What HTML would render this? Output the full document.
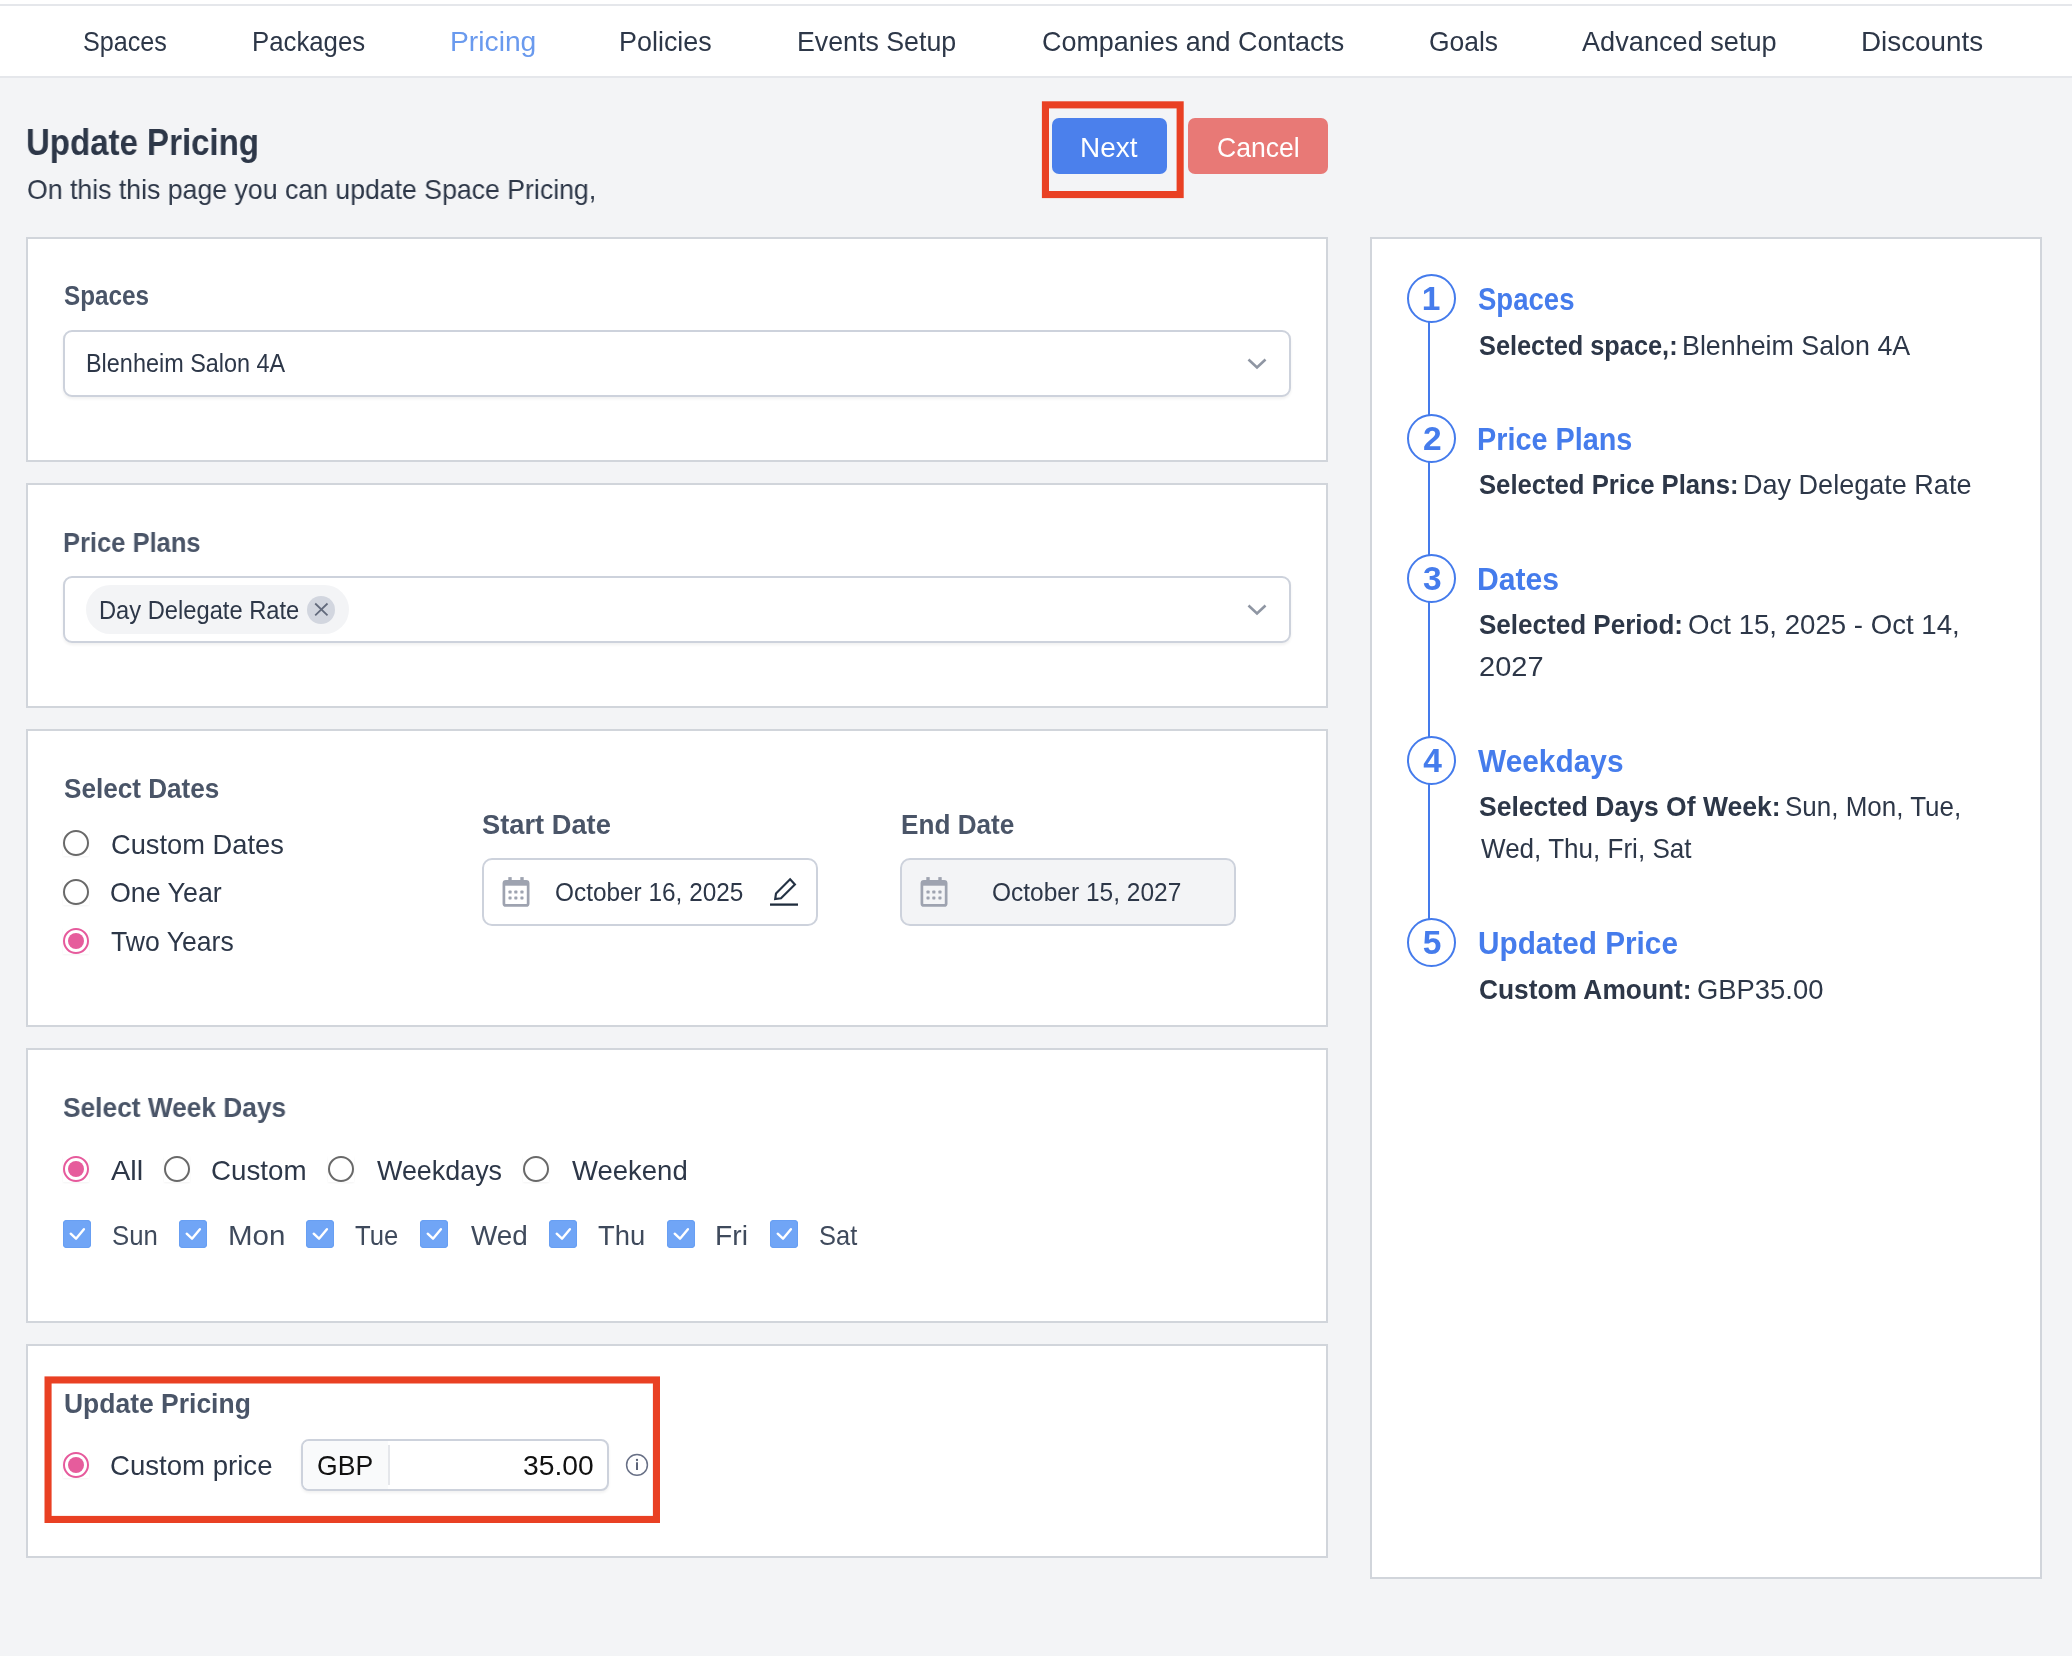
<!DOCTYPE html>
<html lang="en">
<head>
<meta charset="utf-8">
<title>Update Pricing</title>
<style>
*,*:before,*:after{box-sizing:border-box}
html,body{margin:0;padding:0}
body{width:2072px;height:1656px;position:relative;overflow:hidden;background:#f3f4f6;font-family:"Liberation Sans",sans-serif;color:#2d3748;will-change:transform}
.t{position:absolute;white-space:pre;line-height:1;margin:0;text-decoration:none;transform-origin:0 0}
.ic{position:absolute;display:block}
nav{position:absolute;left:0;top:0;width:2072px;height:78px;background:#fff;border-top:2px solid #e5e7eb;border-bottom:2px solid #e5e7eb}
nav:before{content:"";position:absolute;left:0;top:-2px;width:100%;height:4px;background:#fff}
nav:after{content:"";position:absolute;left:0;top:2px;width:100%;height:2px;background:#e5e7eb}
.card{position:absolute;background:#fff;border:2px solid #d1d5db}
.sel{position:absolute;background:#fff;border:2px solid #cdd2dc;border-radius:9px;box-shadow:0 2px 3px rgba(0,0,0,.06)}
.btn{position:absolute;border-radius:7px;height:56px;top:118px}
.radio{position:absolute;width:26px;height:26px;background:#fff;box-shadow:0 1px 2px rgba(0,0,0,.05)}
.radio:before{content:"";position:absolute;left:0;top:0;width:26px;height:26px;border-radius:50%;border:2px solid #696969}
.radio.on:before{border-color:#e65a9c}
.radio.on i{position:absolute;left:5px;top:5px;width:16px;height:16px;border-radius:50%;background:#e65c9c}
.cb{position:absolute;width:28px;height:28px;border-radius:4px;background:#70a5f6;box-shadow:inset 0 0 0 1px #689ff3}
.cb svg{display:block}
.anno{position:absolute;border:7px solid #e94023}
.num{position:absolute;width:49px;height:49px;border-radius:50%;border:2px solid #447bec;background:#fff}
.vline{position:absolute;width:2px;background:#447bec;left:1428px}
@media (max-width:1500px){html{zoom:.5}}
</style>
</head>
<body>

<nav>
<a class="t" style="left:82.8px;top:25.2px;font-size:28.5px;transform:scaleX(0.8825);">Spaces</a>
<a class="t" style="left:252.2px;top:25.2px;font-size:28.5px;transform:scaleX(0.9040);">Packages</a>
<a class="t" style="left:449.8px;top:25.2px;font-size:28.5px;color:#6a9aee;transform:scaleX(0.9910);">Pricing</a>
<a class="t" style="left:619.1px;top:25.2px;font-size:28.5px;transform:scaleX(0.9447);">Policies</a>
<a class="t" style="left:797.4px;top:25.2px;font-size:28.5px;transform:scaleX(0.9392);">Events Setup</a>
<a class="t" style="left:1041.6px;top:25.2px;font-size:28.5px;transform:scaleX(0.9447);">Companies and Contacts</a>
<a class="t" style="left:1428.8px;top:25.2px;font-size:28.5px;transform:scaleX(0.9273);">Goals</a>
<a class="t" style="left:1582.1px;top:25.2px;font-size:28.5px;transform:scaleX(0.9526);">Advanced setup</a>
<a class="t" style="left:1861.1px;top:25.2px;font-size:28.5px;transform:scaleX(0.9766);">Discounts</a>
</nav>

<header>
<h1 class="t" style="left:26.2px;top:125.2px;font-size:36.5px;font-weight:700;transform:scaleX(0.9045);">Update Pricing</h1>
<p class="t" style="left:26.7px;top:174.6px;font-size:28.5px;transform:scaleX(0.9356);">On this this page you can update Space Pricing,</p>
<div class="btn" style="left:1052px;width:115px;background:#4b80ec"></div>
<span class="t" style="left:1080.0px;top:132.9px;font-size:28.5px;color:#fff;transform:scaleX(0.9797);">Next</span>
<div class="btn" style="left:1188px;width:140px;background:#e87976"></div>
<span class="t" style="left:1217.0px;top:132.9px;font-size:28.5px;color:#fff;transform:scaleX(0.9322);">Cancel</span>
</header>

<section class="card" style="left:26px;top:237px;width:1302px;height:225px"></section>
<h2 class="t" style="left:63.6px;top:281.4px;font-size:28.5px;font-weight:700;color:#4a5568;transform:scaleX(0.8514);">Spaces</h2>
<div class="sel" style="left:63px;top:330px;width:1228px;height:67px"></div>
<span class="t" style="left:86.3px;top:351.4px;font-size:25.0px;transform:scaleX(0.9369);">Blenheim Salon 4A</span>
<svg class="ic" style="left:1246px;top:357px" width="22" height="14" viewBox="0 0 22 14"><path d="M2.5 2.5 L11 10.5 L19.5 2.5" fill="none" stroke="#8f96a3" stroke-width="2.6" stroke-linejoin="miter"/></svg>
<section class="card" style="left:26px;top:483px;width:1302px;height:225px"></section>
<h2 class="t" style="left:63.0px;top:527.8px;font-size:28.5px;font-weight:700;color:#4a5568;transform:scaleX(0.8951);">Price Plans</h2>
<div class="sel" style="left:63px;top:576px;width:1228px;height:67px"></div>
<div style="position:absolute;left:86px;top:585px;width:263px;height:49px;border-radius:25px;background:#f3f4f6"></div>
<span class="t" style="left:99.4px;top:597.7px;font-size:25.0px;transform:scaleX(0.9480);">Day Delegate Rate</span>
<svg class="ic" style="left:307px;top:596px" width="28" height="28" viewBox="0 0 28 28"><circle cx="14" cy="14" r="14" fill="#d2d6df"/><path d="M8.2 7.5 L20.5 19.3 M20.5 7.5 L8.2 19.3" stroke="#626a7c" stroke-width="1.75" fill="none"/></svg>
<svg class="ic" style="left:1246px;top:603px" width="22" height="14" viewBox="0 0 22 14"><path d="M2.5 2.5 L11 10.5 L19.5 2.5" fill="none" stroke="#8f96a3" stroke-width="2.6" stroke-linejoin="miter"/></svg>
<section class="card" style="left:26px;top:729px;width:1302px;height:298px"></section>
<h2 class="t" style="left:63.5px;top:773.6px;font-size:28.5px;font-weight:700;color:#4a5568;transform:scaleX(0.9161);">Select Dates</h2>
<span class="radio" style="left:63px;top:829.7px"></span>
<span class="t" style="left:110.5px;top:829.5px;font-size:28.5px;transform:scaleX(0.9568);">Custom Dates</span>
<span class="radio" style="left:63px;top:878.6px"></span>
<span class="t" style="left:110.3px;top:878.4px;font-size:28.5px;transform:scaleX(0.9402);">One Year</span>
<span class="radio on" style="left:63px;top:928px"><i></i></span>
<span class="t" style="left:111.2px;top:927.2px;font-size:28.5px;transform:scaleX(0.9328);">Two Years</span>
<h2 class="t" style="left:482.1px;top:809.8px;font-size:28.5px;font-weight:700;color:#4a5568;transform:scaleX(0.9569);">Start Date</h2>
<div class="sel" style="left:482px;top:858px;width:336px;height:68px;border-radius:10px;box-shadow:none"></div>
<svg class="ic" style="left:502px;top:877px" width="28" height="31" viewBox="0 0 28 31"><rect x="6.3" y="0.1" width="3.4" height="4" fill="#9ea3b0"/><rect x="18.3" y="0.1" width="3.4" height="4" fill="#9ea3b0"/><rect x="1.9" y="4.35" width="24.25" height="24.1" rx="2" fill="none" stroke="#9ea3b0" stroke-width="2.7"/><rect x="1.5" y="4" width="25" height="4.7" fill="#9ea3b0"/><rect x="6.5" y="13.5" width="3.1" height="3.1" rx=".7" fill="#9ea3b0"/><rect x="12.3" y="13.5" width="3.1" height="3.1" rx=".7" fill="#9ea3b0"/><rect x="18.4" y="13.5" width="3.1" height="3.1" rx=".7" fill="#9ea3b0"/><rect x="6.5" y="19.4" width="3.1" height="3.1" rx=".7" fill="#9ea3b0"/><rect x="12.3" y="19.4" width="3.1" height="3.1" rx=".7" fill="#9ea3b0"/><rect x="18.4" y="19.4" width="3.1" height="3.1" rx=".7" fill="#9ea3b0"/></svg>
<span class="t" style="left:554.8px;top:879.5px;font-size:25.0px;transform:scaleX(0.9750);">October 16, 2025</span>
<svg class="ic" style="left:769px;top:876px" width="30" height="31" viewBox="0 0 30 31"><path d="M1 28.6 H29" stroke="#1f2d3d" stroke-width="2.3" fill="none"/><path d="M21.1 3.3 L25.9 8.4 L12 22.3 L6.2 23 L7 17.5 Z" fill="none" stroke="#253345" stroke-width="2.15" stroke-linejoin="miter"/></svg>
<h2 class="t" style="left:901.4px;top:809.8px;font-size:28.5px;font-weight:700;color:#4a5568;transform:scaleX(0.9174);">End Date</h2>
<div class="sel" style="left:900px;top:858px;width:336px;height:68px;border-radius:10px;box-shadow:none;background:#f3f4f6"></div>
<svg class="ic" style="left:920px;top:877px" width="28" height="31" viewBox="0 0 28 31"><rect x="6.3" y="0.1" width="3.4" height="4" fill="#9ea3b0"/><rect x="18.3" y="0.1" width="3.4" height="4" fill="#9ea3b0"/><rect x="1.9" y="4.35" width="24.25" height="24.1" rx="2" fill="none" stroke="#9ea3b0" stroke-width="2.7"/><rect x="1.5" y="4" width="25" height="4.7" fill="#9ea3b0"/><rect x="6.5" y="13.5" width="3.1" height="3.1" rx=".7" fill="#9ea3b0"/><rect x="12.3" y="13.5" width="3.1" height="3.1" rx=".7" fill="#9ea3b0"/><rect x="18.4" y="13.5" width="3.1" height="3.1" rx=".7" fill="#9ea3b0"/><rect x="6.5" y="19.4" width="3.1" height="3.1" rx=".7" fill="#9ea3b0"/><rect x="12.3" y="19.4" width="3.1" height="3.1" rx=".7" fill="#9ea3b0"/><rect x="18.4" y="19.4" width="3.1" height="3.1" rx=".7" fill="#9ea3b0"/></svg>
<span class="t" style="left:991.9px;top:879.5px;font-size:25.0px;transform:scaleX(0.9798);">October 15, 2027</span>
<section class="card" style="left:26px;top:1048px;width:1302px;height:275px"></section>
<h2 class="t" style="left:63.3px;top:1093.0px;font-size:28.5px;font-weight:700;color:#4a5568;transform:scaleX(0.9224);">Select Week Days</h2>
<span class="radio on" style="left:63px;top:1155.8px"><i></i></span>
<span class="t" style="left:111.4px;top:1156.0px;font-size:28.5px;transform:scaleX(1.0190);">All</span>
<span class="radio" style="left:164px;top:1155.8px"></span>
<span class="t" style="left:211.4px;top:1156.0px;font-size:28.5px;transform:scaleX(0.9735);">Custom</span>
<span class="radio" style="left:328px;top:1155.8px"></span>
<span class="t" style="left:376.7px;top:1156.0px;font-size:28.5px;transform:scaleX(0.9434);">Weekdays</span>
<span class="radio" style="left:523px;top:1155.8px"></span>
<span class="t" style="left:571.7px;top:1156.0px;font-size:28.5px;transform:scaleX(0.9649);">Weekend</span>
<span class="cb" style="left:63px;top:1220px"><svg width="28" height="28" viewBox="0 0 28 28"><path d="M7.7 13.7 L13 18.7 L20.9 9.2" fill="none" stroke="#fff" stroke-width="2.4" stroke-linecap="round" stroke-linejoin="round"/></svg></span>
<span class="t" style="left:112.4px;top:1220.5px;font-size:28.5px;color:#3f4a5c;transform:scaleX(0.9030);">Sun</span>
<span class="cb" style="left:179px;top:1220px"><svg width="28" height="28" viewBox="0 0 28 28"><path d="M7.7 13.7 L13 18.7 L20.9 9.2" fill="none" stroke="#fff" stroke-width="2.4" stroke-linecap="round" stroke-linejoin="round"/></svg></span>
<span class="t" style="left:227.8px;top:1220.5px;font-size:28.5px;color:#3f4a5c;transform:scaleX(1.0353);">Mon</span>
<span class="cb" style="left:306px;top:1220px"><svg width="28" height="28" viewBox="0 0 28 28"><path d="M7.7 13.7 L13 18.7 L20.9 9.2" fill="none" stroke="#fff" stroke-width="2.4" stroke-linecap="round" stroke-linejoin="round"/></svg></span>
<span class="t" style="left:355.4px;top:1220.5px;font-size:28.5px;color:#3f4a5c;transform:scaleX(0.9003);">Tue</span>
<span class="cb" style="left:420px;top:1220px"><svg width="28" height="28" viewBox="0 0 28 28"><path d="M7.7 13.7 L13 18.7 L20.9 9.2" fill="none" stroke="#fff" stroke-width="2.4" stroke-linecap="round" stroke-linejoin="round"/></svg></span>
<span class="t" style="left:471.0px;top:1220.5px;font-size:28.5px;color:#3f4a5c;transform:scaleX(0.9788);">Wed</span>
<span class="cb" style="left:549px;top:1220px"><svg width="28" height="28" viewBox="0 0 28 28"><path d="M7.7 13.7 L13 18.7 L20.9 9.2" fill="none" stroke="#fff" stroke-width="2.4" stroke-linecap="round" stroke-linejoin="round"/></svg></span>
<span class="t" style="left:598.4px;top:1220.5px;font-size:28.5px;color:#3f4a5c;transform:scaleX(0.9614);">Thu</span>
<span class="cb" style="left:667px;top:1220px"><svg width="28" height="28" viewBox="0 0 28 28"><path d="M7.7 13.7 L13 18.7 L20.9 9.2" fill="none" stroke="#fff" stroke-width="2.4" stroke-linecap="round" stroke-linejoin="round"/></svg></span>
<span class="t" style="left:715.4px;top:1220.5px;font-size:28.5px;color:#3f4a5c;transform:scaleX(0.9914);">Fri</span>
<span class="cb" style="left:770px;top:1220px"><svg width="28" height="28" viewBox="0 0 28 28"><path d="M7.7 13.7 L13 18.7 L20.9 9.2" fill="none" stroke="#fff" stroke-width="2.4" stroke-linecap="round" stroke-linejoin="round"/></svg></span>
<span class="t" style="left:819.1px;top:1220.5px;font-size:28.5px;color:#3f4a5c;transform:scaleX(0.8929);">Sat</span>
<section class="card" style="left:26px;top:1344px;width:1302px;height:214px"></section>
<h2 class="t" style="left:63.5px;top:1388.8px;font-size:28.5px;font-weight:700;color:#4a5568;transform:scaleX(0.9288);">Update Pricing</h2>
<span class="radio on" style="left:63px;top:1452px"><i></i></span>
<span class="t" style="left:110.4px;top:1451.0px;font-size:28.5px;transform:scaleX(0.9680);">Custom price</span>
<div class="sel" style="left:301px;top:1439px;width:308px;height:52px;border-radius:8px;overflow:hidden"><div style="position:absolute;left:0;top:0;width:85px;height:48px;background:#f9fafb"></div><div style="position:absolute;left:85px;top:4px;width:2px;height:40px;background:#e5e7eb"></div></div>
<span class="t" style="left:317.4px;top:1451.0px;font-size:28.5px;color:#111;transform:scaleX(0.9321);">GBP</span>
<span class="t" style="left:522.6px;top:1451.0px;font-size:28.5px;color:#111;transform:scaleX(0.9902);">35.00</span>
<svg class="ic" style="left:625px;top:1453px" width="24" height="24" viewBox="0 0 24 24"><circle cx="12" cy="11.9" r="10.4" fill="none" stroke="#687086" stroke-width="1.5"/><path d="M12 9.2 V17" stroke="#5b6378" stroke-width="2"/><circle cx="12" cy="7" r="1.15" fill="#5b6378"/></svg>

<aside class="card" style="left:1370px;top:237px;width:672px;height:1342px"></aside>
<div class="vline" style="top:298px;height:644px"></div>
<div class="num" style="left:1407px;top:274.0px"></div>
<span class="t" style="left:1421.8px;top:281.8px;font-size:33.5px;font-weight:700;color:#457cec;transform:scaleX(1);">1</span>
<h3 class="t" style="left:1477.5px;top:282.5px;font-size:32.0px;font-weight:700;color:#457cec;transform:scaleX(0.8607);">Spaces</h3>
<div class="num" style="left:1407px;top:414.0px"></div>
<span class="t" style="left:1422.9px;top:421.8px;font-size:33.5px;font-weight:700;color:#457cec;transform:scaleX(1);">2</span>
<h3 class="t" style="left:1477.0px;top:422.5px;font-size:32.0px;font-weight:700;color:#457cec;transform:scaleX(0.9001);">Price Plans</h3>
<div class="num" style="left:1407px;top:554.0px"></div>
<span class="t" style="left:1422.9px;top:561.8px;font-size:33.5px;font-weight:700;color:#457cec;transform:scaleX(1);">3</span>
<h3 class="t" style="left:1476.9px;top:562.5px;font-size:32.0px;font-weight:700;color:#457cec;transform:scaleX(0.9418);">Dates</h3>
<div class="num" style="left:1407px;top:736.0px"></div>
<span class="t" style="left:1423.2px;top:743.8px;font-size:33.5px;font-weight:700;color:#457cec;transform:scaleX(1);">4</span>
<h3 class="t" style="left:1478.0px;top:744.5px;font-size:32.0px;font-weight:700;color:#457cec;transform:scaleX(0.9331);">Weekdays</h3>
<div class="num" style="left:1407px;top:918.0px"></div>
<span class="t" style="left:1422.7px;top:925.8px;font-size:33.5px;font-weight:700;color:#457cec;transform:scaleX(1);">5</span>
<h3 class="t" style="left:1477.8px;top:926.5px;font-size:32.0px;font-weight:700;color:#457cec;transform:scaleX(0.9292);">Updated Price</h3>
<b class="t" style="left:1479.3px;top:330.6px;font-size:28.5px;font-weight:700;transform:scaleX(0.8890);">Selected space,:</b>
<span class="t" style="left:1682.3px;top:330.6px;font-size:28.5px;transform:scaleX(0.9416);">Blenheim Salon 4A</span>
<b class="t" style="left:1479.1px;top:470.1px;font-size:28.5px;font-weight:700;transform:scaleX(0.9002);">Selected Price Plans:</b>
<span class="t" style="left:1743.4px;top:470.1px;font-size:28.5px;transform:scaleX(0.9487);">Day Delegate Rate</span>
<b class="t" style="left:1479.1px;top:610.4px;font-size:28.5px;font-weight:700;transform:scaleX(0.9135);">Selected Period:</b>
<span class="t" style="left:1688.2px;top:610.4px;font-size:28.5px;transform:scaleX(0.9690);">Oct 15, 2025 - Oct 14,</span>
<span class="t" style="left:1479.4px;top:652.1px;font-size:28.5px;transform:scaleX(1.0179);">2027</span>
<b class="t" style="left:1479.0px;top:792.2px;font-size:28.5px;font-weight:700;transform:scaleX(0.9299);">Selected Days Of Week:</b>
<span class="t" style="left:1785.1px;top:792.2px;font-size:28.5px;transform:scaleX(0.9116);">Sun, Mon, Tue,</span>
<span class="t" style="left:1480.5px;top:834.4px;font-size:28.5px;transform:scaleX(0.9145);">Wed, Thu, Fri, Sat</span>
<b class="t" style="left:1478.9px;top:975.1px;font-size:28.5px;font-weight:700;transform:scaleX(0.9240);">Custom Amount:</b>
<span class="t" style="left:1697.1px;top:975.1px;font-size:28.5px;transform:scaleX(0.9613);">GBP35.00</span>
<svg class="ic" style="left:1040px;top:100px" width="145" height="100"><rect x="5.45" y="4.85" width="134.70" height="89.70" fill="none" stroke="#e94023" stroke-width="7.1"/></svg>
<svg class="ic" style="left:43px;top:1375px" width="619" height="150"><rect x="5.05" y="4.95" width="608.40" height="139.50" fill="none" stroke="#e94023" stroke-width="7.1"/></svg>

</body>
</html>
